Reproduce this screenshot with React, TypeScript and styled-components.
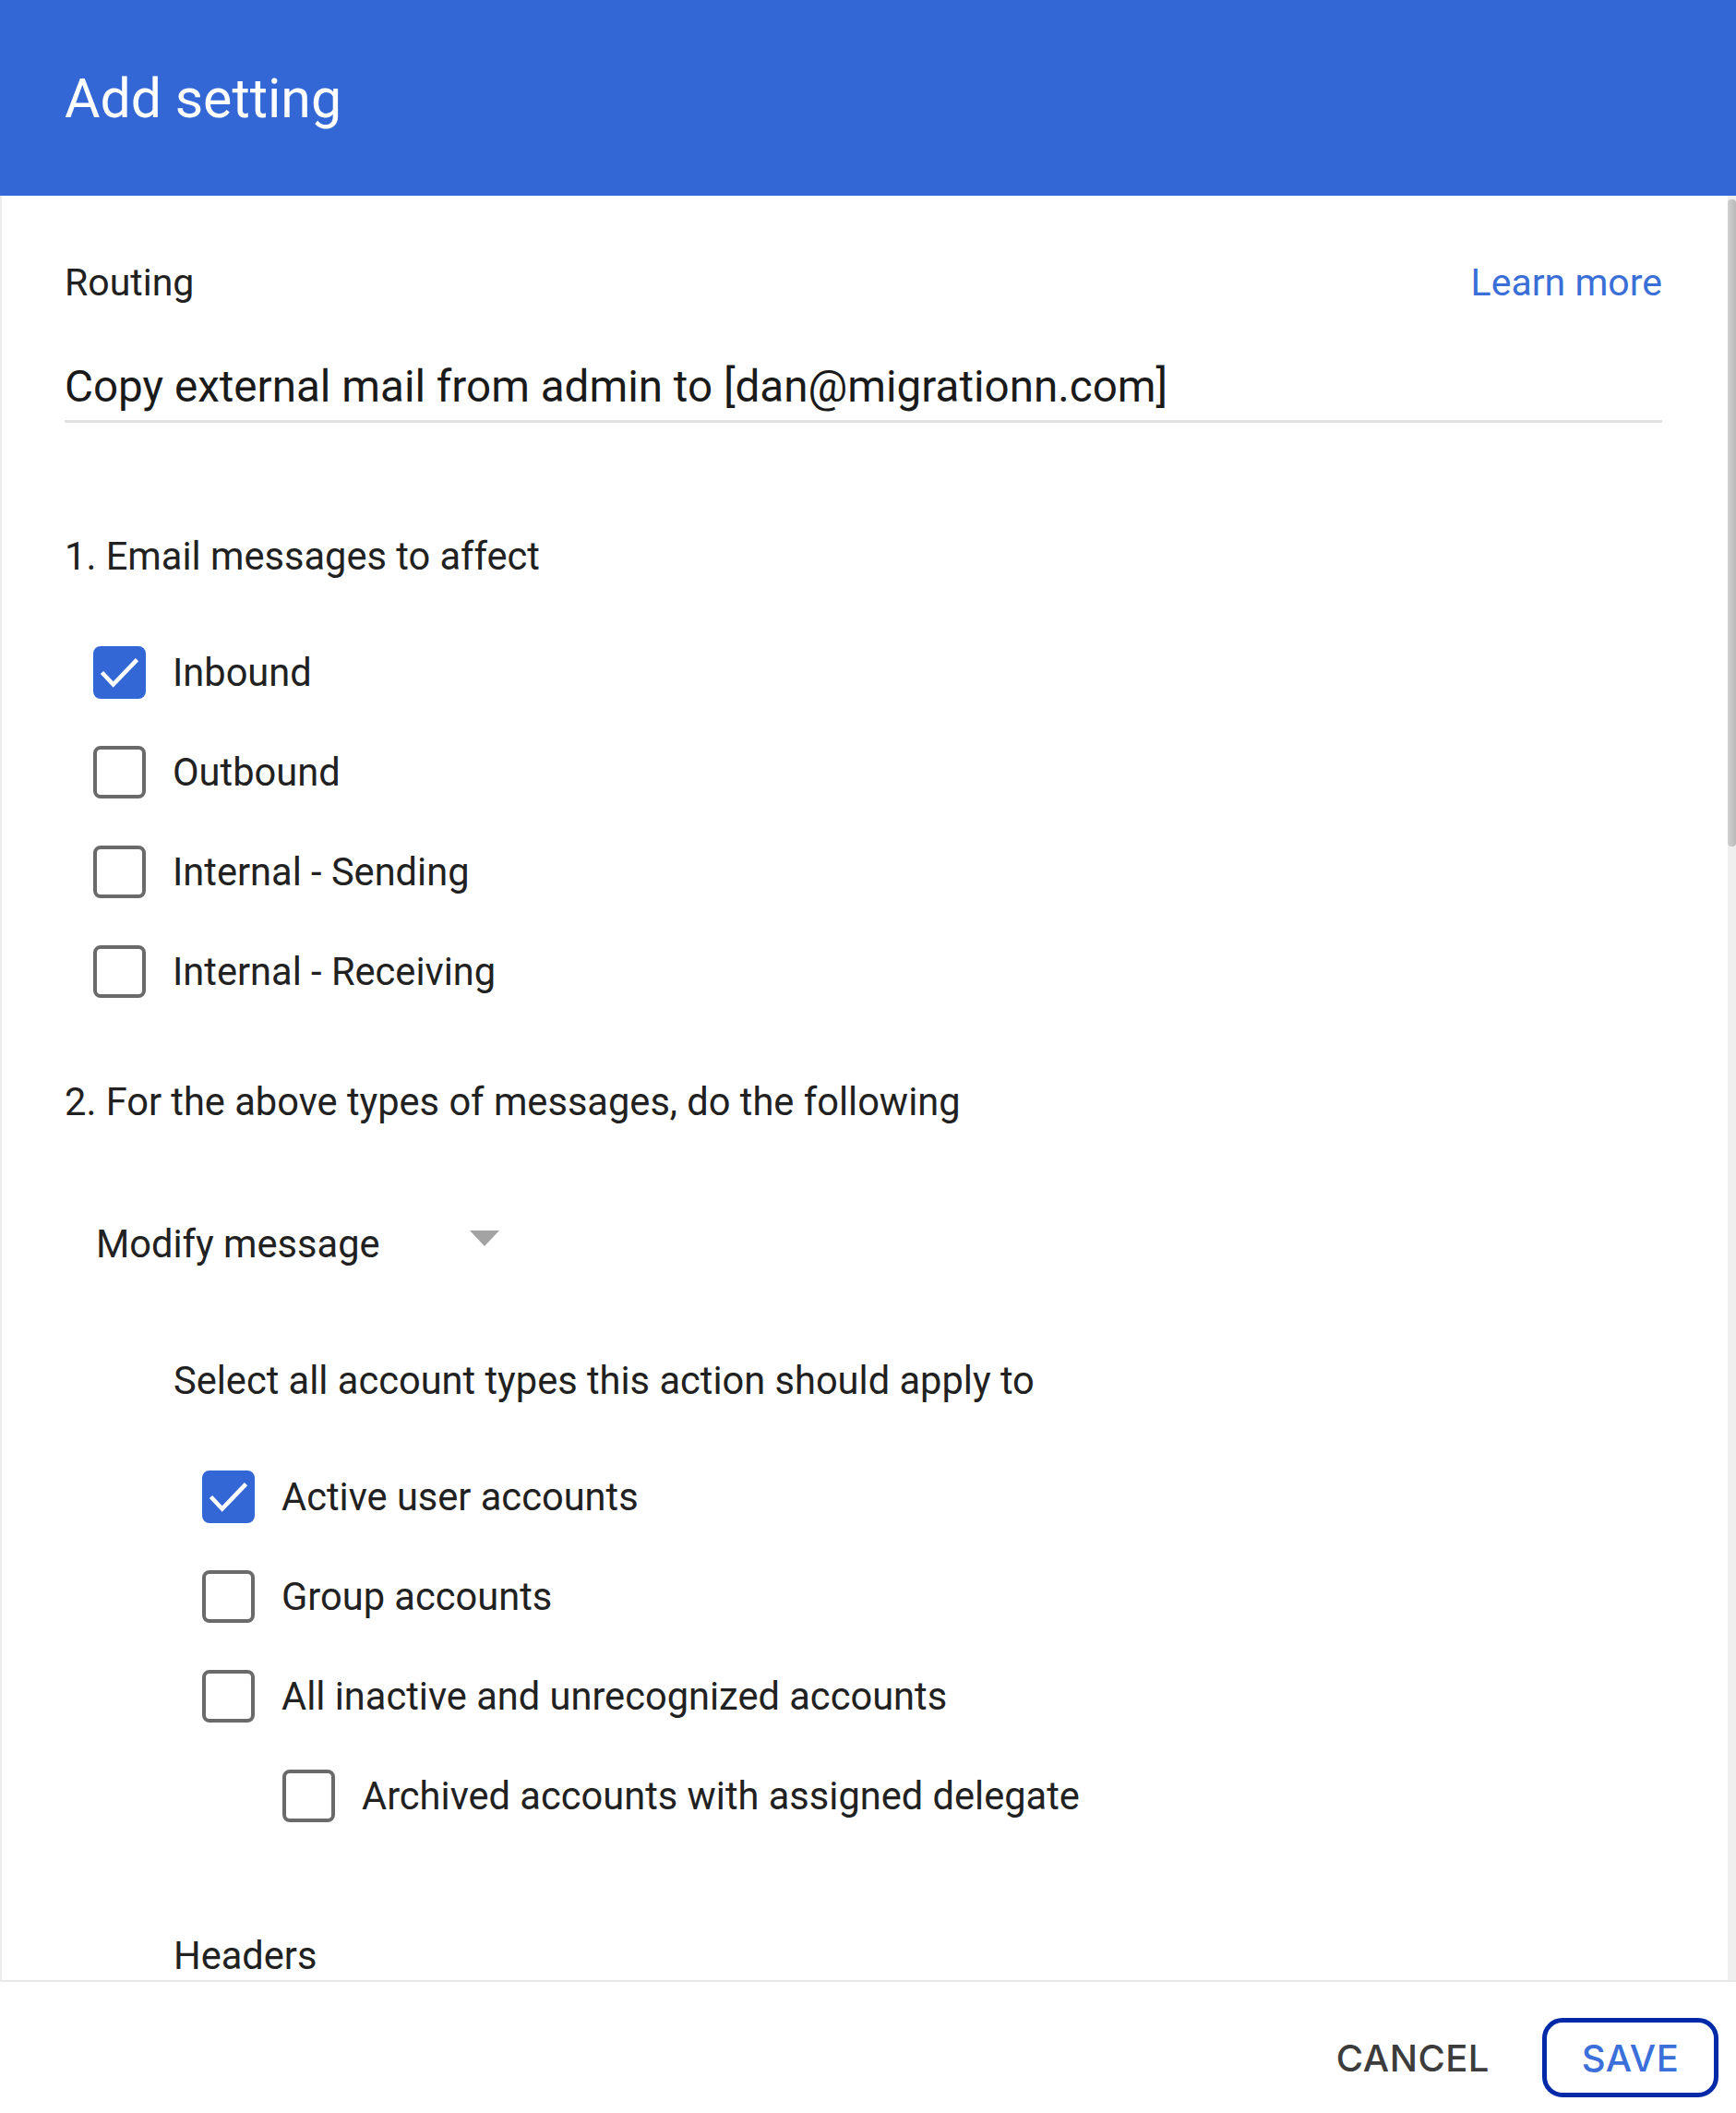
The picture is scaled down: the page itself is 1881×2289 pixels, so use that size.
import * as React from 'react';
import styled, { createGlobalStyle } from 'styled-components';

const GlobalStyle = createGlobalStyle`
	html, body {
		margin: 0;
		padding: 0;
		background: #ffffff;
	}
	body {
		font-family: Roboto, "Noto Sans", "Liberation Sans", sans-serif;
		color: #212121;
	}
`;

const blue = '#3367d6';

const Dialog = styled.div`
	width: 1881px;
	height: 2289px;
	display: flex;
	flex-direction: column;
	background: #fff;
	overflow: hidden;
`;

const Header = styled.header`
	height: 212px;
	flex: none;
	background: ${blue};
	display: flex;
	align-items: center;
	padding-left: 70px;
	box-sizing: border-box;
`;

const Title = styled.h1`
	margin: 0;
	font-size: 59px;
	font-weight: 400;
	color: #fff;
	line-height: 1;
`;

const Body = styled.div`
	height: 1935px;
	flex: none;
	display: flex;
	box-sizing: border-box;
	border-left: 2px solid #ececec;
	border-bottom: 2px solid #e8e8e8;
	overflow: hidden;
`;

const Content = styled.div`
	flex: 1;
	padding: 69px 71px 0 68px;
	display: flex;
	flex-direction: column;
	min-width: 0;
`;

const ScrollTrack = styled.div`
	width: 9px;
	flex: none;
	background: #efefef;
	display: flex;
	flex-direction: column;
`;

const ScrollThumb = styled.div`
	height: 701px;
	margin-top: 4px;
	border-radius: 4px;
	background: linear-gradient(to right, #d0d0d0, #b9b9b9);
`;

const TopRow = styled.div`
	display: flex;
	justify-content: space-between;
	align-items: center;
	height: 50px;
	font-size: 41px;
`;

const LearnMore = styled.a`
	color: #3a6fd8;
	text-decoration: none;
	font-size: 41px;
`;

const NameField = styled.div`
	margin-top: 63px;
	font-size: 47.6px;
	line-height: 50px;
	padding-bottom: 11px;
	border-bottom: 3px solid #e2e2e2;
	color: #1a1a1a;
`;

const Text = styled.div<{ $top: number; $indent?: number }>`
	margin-top: ${p => p.$top}px;
	padding-left: ${p => p.$indent || 0}px;
	font-size: 41.6px;
	line-height: 50px;
	height: 50px;
	color: #212121;
`;

const List = styled.div<{ $top: number; $indent: number }>`
	margin-top: ${p => p.$top}px;
	padding-left: ${p => p.$indent}px;
	display: flex;
	flex-direction: column;
`;

const Row = styled.label<{ $indent?: number }>`
	height: 108px;
	display: flex;
	align-items: center;
	gap: 29px;
	padding-left: ${p => p.$indent || 0}px;
	font-size: 41.6px;
	color: #212121;
`;

const Box = styled.span<{ $checked?: boolean }>`
	width: 57px;
	height: 57px;
	flex: none;
	box-sizing: border-box;
	border-radius: 8px;
	border: 4px solid ${p => (p.$checked ? blue : '#6a6a6a')};
	background: ${p => (p.$checked ? blue : '#fff')};
	display: flex;
	align-items: center;
	justify-content: center;
`;

const Select = styled.div`
	margin-top: 104px;
	margin-left: 34px;
	width: 437px;
	height: 50px;
	display: flex;
	justify-content: space-between;
	font-size: 41.6px;
	line-height: 50px;
	color: #212121;
`;

const Caret = styled.span`
	width: 0;
	height: 0;
	margin-top: 10px;
	border-left: 16px solid transparent;
	border-right: 16px solid transparent;
	border-top: 17px solid #a3a3a3;
`;

const Footer = styled.footer`
	flex: 1;
	display: flex;
	justify-content: flex-end;
	align-items: center;
	gap: 57px;
	padding-right: 19px;
	padding-top: 22px;
	font-family: Inter, "Open Sans", sans-serif;
`;

const Button = styled.button<{ $primary?: boolean }>`
	font-family: inherit;
	font-size: 40px;
	font-weight: 500;
	letter-spacing: 0.5px;
	background: #fff;
	cursor: pointer;
	color: ${p => (p.$primary ? '#3b6fd9' : '#3c3c3c')};
	border: ${p => (p.$primary ? '5px solid #0029a8' : 'none')};
	border-radius: 22px;
	padding: 0;
	width: ${p => (p.$primary ? '191px' : 'auto')};
	height: 86px;
`;

const Check = () => (
	<svg width="49" height="49" viewBox="0 0 49 49">
		<path d="M5.5 24.5 L17.7 37.5 L43.5 10.7" fill="none" stroke="#fff" strokeWidth="4.6" />
	</svg>
);

const CheckRow = ({ label, checked, indent }: { label: string; checked?: boolean; indent?: number }) => (
	<Row $indent={indent}>
		<Box $checked={checked}>{checked ? <Check /> : null}</Box>
		{label}
	</Row>
);

export default function App() {
	return (
		<>
			<GlobalStyle />
			<Dialog>
				<Header>
					<Title>Add setting</Title>
				</Header>
				<Body>
					<Content>
						<TopRow>
							<span>Routing</span>
							<LearnMore href="#">Learn more</LearnMore>
						</TopRow>
						<NameField>Copy external mail from admin to [dan@migrationn.com]</NameField>

						<Text $top={120}>1. Email messages to affect</Text>
						<List $top={46} $indent={31}>
							<CheckRow label="Inbound" checked />
							<CheckRow label="Outbound" />
							<CheckRow label="Internal - Sending" />
							<CheckRow label="Internal - Receiving" />
						</List>

						<Text $top={63}>2. For the above types of messages, do the following</Text>
						<Select>
							<span>Modify message</span>
							<Caret />
						</Select>

						<Text $top={98} $indent={118}>Select all account types this action should apply to</Text>
						<List $top={46} $indent={149}>
							<CheckRow label="Active user accounts" checked />
							<CheckRow label="Group accounts" />
							<CheckRow label="All inactive and unrecognized accounts" />
							<CheckRow label="Archived accounts with assigned delegate" indent={87} />
						</List>

						<Text $top={95} $indent={118}>Headers</Text>
					</Content>
					<ScrollTrack>
						<ScrollThumb />
					</ScrollTrack>
				</Body>
				<Footer>
					<Button>CANCEL</Button>
					<Button $primary>SAVE</Button>
				</Footer>
			</Dialog>
		</>
	);
}
